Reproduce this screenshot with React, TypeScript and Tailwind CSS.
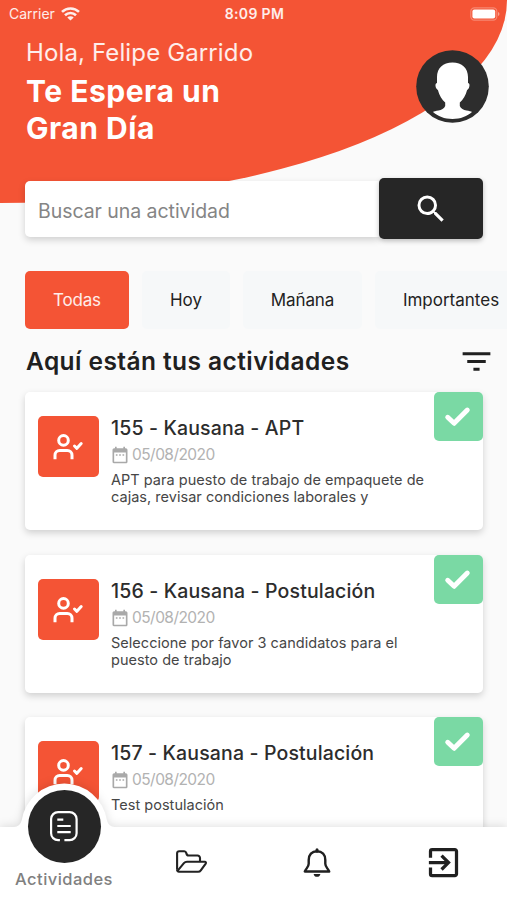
import { MdDateRange, MdExitToApp, MdFilterList, MdSearch } from "react-icons/md";

type Activity = { title: string; date: string; description: string[] };

const activities: Activity[] = [
  {
    title: "155 - Kausana - APT",
    date: "05/08/2020",
    description: ["APT para puesto de trabajo de empaquete de", "cajas, revisar condiciones laborales y"],
  },
  {
    title: "156 - Kausana - Postulación",
    date: "05/08/2020",
    description: ["Seleccione por favor 3 candidatos para el", "puesto de trabajo"],
  },
  {
    title: "157 - Kausana - Postulación",
    date: "05/08/2020",
    description: ["Test postulación"],
  },
];

function StatusBar() {
  return (
    <div className="flex h-[27px] items-center justify-between pr-[7px] pl-[9px] text-[14px] text-white/90">
      <div className="flex w-[200px] items-center gap-[6px]">
        <span>Carrier</span>
        <svg width="19" height="14" viewBox="0 0 19 14" fill="none" stroke="currentColor" strokeWidth="2.6">
          <path d="M1 4.900a12.200 12.200 0 0 1 17 0" />
          <path d="M4 8.300a7.900 7.900 0 0 1 11 0" />
          <path d="M9.500 13.500 6.300 10.500a4.600 4.600 0 0 1 6.400 0Z" fill="currentColor" stroke="none" />
        </svg>
      </div>
      <span className="text-[14px] font-semibold tracking-[0.350px] whitespace-nowrap">8:09 PM</span>
      <div className="flex w-[200px] justify-end">
        <svg width="30" height="14" viewBox="0 0 30 14">
          <rect x="0.8" y="0.8" width="26" height="12.4" rx="3.6" fill="none" stroke="#fff" strokeOpacity="0.3" strokeWidth="1.2" />
          <rect x="2.400" y="2.400" width="22.800" height="9.200" rx="2" fill="#fff" />
          <path d="M28 5v4q1.500-.6 1.500-2T28 5Z" fill="#fff" fillOpacity="0.45" />
        </svg>
      </div>
    </div>
  );
}

function Avatar() {
  return (
    <svg className="mt-[9px] shrink-0" width="73" height="73" viewBox="0 0 73 73">
      <circle cx="36.500" cy="36.500" r="36.300" fill="#2d2d2d" />
      <path
        d="M36.500 12.500c-9.500 0-15.500 5.800-15.500 14.500v6c-2 .3-1.800 3.500-.6 5.500.5.900 1.200 1.100 1.500 1.500 1.200 5.200 4.200 9.700 7.300 12.600v3.400c-1 2.800-3.800 3.900-6.700 4.600-2.500.5-4.800.8-5.500 1.300 4.700 4.200 11.500 7 19.500 7s14.900-2.800 19.500-7c-.8-.5-3-.8-5.500-1.300-2.900-.7-5.700-1.800-6.700-4.600v-3.400c3.100-2.900 6.100-7.400 7.300-12.600.4-.4 1-.6 1.500-1.500 1.200-2 1.400-5.200-.6-5.500v-6c0-8.700-6-14.500-15.500-14.500Z"
        fill="#fff"
      />
    </svg>
  );
}

function UserCheckIcon() {
  return (
    <svg width="61" height="61" viewBox="0 0 61 61" fill="none" stroke="#fff" strokeWidth="3" strokeLinejoin="round">
      <circle cx="25.500" cy="24.400" r="4.800" />
      <path d="M17 43.200v-4a4.700 4.700 0 0 1 4.700-4.700h7.600a4.700 4.700 0 0 1 4.700 4.700v4" />
      <path d="m36.500 30 2.400 2.300 4.300-4.700" strokeLinecap="round" />
    </svg>
  );
}

function ActivityCard({ title, date, description }: Activity) {
  return (
    <article className="flex h-[138px] rounded-[5px] bg-white pl-[13px] shadow-[0_3px_7px_rgba(0,0,0,0.17)]">
      <div className="mt-[24px] h-[61px] w-[61px] shrink-0 rounded-[5px] bg-[#f45435]">
        <UserCheckIcon />
      </div>
      <div className="ml-[12px] min-w-0 flex-1 pt-[24px] whitespace-nowrap">
        <h3 className="text-[19.500px] leading-[24px] font-medium tracking-[0.140px] text-[#2c2c2c]">{title}</h3>
        <div className="mt-[5px] -ml-px flex h-[20px] items-center gap-[2px] text-[#a9a9a9]">
          <MdDateRange size={20} />
          <span className="text-[15.500px] leading-[20px] tracking-[-0.550px] text-[#b2b2b2]">{date}</span>
        </div>
        <p className="mt-[6px] text-[14.500px] leading-[17.300px] tracking-[0.030px] text-[#464646]">
          {description.map((line) => (
            <span key={line} className="block">{line}</span>
          ))}
        </p>
      </div>
      <div className="h-[49px] w-[49px] shrink-0 rounded-[5px] bg-[#7ad9a4]">
        <svg width="49" height="49" viewBox="0 0 49 49" fill="none" stroke="#fff" strokeWidth="4.900" strokeLinecap="round" strokeLinejoin="round">
          <path d="m13.700 25.300 6.400 6L33.300 18" />
        </svg>
      </div>
    </article>
  );
}

function BottomNav() {
  return (
    <nav className="absolute inset-x-0 bottom-0 h-[117px]">
      <svg className="absolute inset-0 drop-shadow-[0_-1px_5px_rgba(0,0,0,0.12)]" width="507" height="117" viewBox="0 0 507 117">
        <path d="M-10 44H14Q20 44 21.800 37A43 43 0 0 1 106.800 37Q108.600 44 114.600 44H517V130H-10Z" fill="#fff" />
      </svg>
      <div className="relative flex h-full">
        <div className="flex w-[128px] flex-col items-center pt-[7px]">
          <div className="h-[73px] w-[73px] rounded-full bg-[#262626]">
            <svg width="73" height="73" viewBox="0 0 73 73" fill="none" stroke="#fff" strokeWidth="2.200">
              <path d="M31.900 50.200h-1.800a7 7 0 0 1-7-7V29.100a7 7 0 0 1 7-7h11.500a7 7 0 0 1 7 7v14.100a7 7 0 0 1-7 7h-5.200" />
              <path d="M29.300 29.700h6M29.300 36h13.400M29.300 42.200h13.400" />
            </svg>
          </div>
          <span className="mt-[6px] text-[16.500px] leading-[20px] font-medium tracking-[0.450px] text-[#808080]">Actividades</span>
        </div>
        <div className="flex w-[126px] justify-center pt-[66px]">
          <svg width="34" height="26" viewBox="0 0 34 26" fill="none" stroke="#222" strokeWidth="2.100" strokeLinejoin="round">
            <path d="M3.100 20.500V4.200a2 2 0 0 1 2-2h5.200c1.300 0 1.700.8 2 1.900.4 1.500.9 2.400 2.300 2.400h8.900a2.500 2.500 0 0 1 2.500 2.500v3.700" />
            <path d="M3.100 20.500a1.900 1.900 0 0 0 2 2.300h19c1.300 0 2-.4 2.700-1.400l4.900-6.800c.6-.9.2-1.800-.9-1.800H13c-1.400 0-2.200.3-3.100 1.300L3.900 21.300" />
          </svg>
        </div>
        <div className="flex w-[126px] justify-center pt-[65px]">
          <svg width="28" height="30" viewBox="0 0 28 30" fill="none" stroke="#202020" strokeWidth="2.400" strokeLinejoin="round">
            <path d="M14 3.200c-5.200 0-8.300 3.700-8.300 8.700v3.900c0 3-2.400 4.500-3.900 7.700h24.400c-1.500-3.200-3.900-4.700-3.900-7.700v-3.900c0-5-3.100-8.700-8.300-8.700Z" />
            <path d="M14 1.800v1.500" strokeWidth="3" strokeLinecap="round" />
            <path d="M10.600 25.900h6.800q-.7 2.900-3.400 2.900t-3.400-2.900Z" fill="#202020" stroke="none" />
          </svg>
        </div>
        <div className="flex w-[127px] justify-center pt-[60px] text-[#202020]">
          <MdExitToApp size={39} />
        </div>
      </div>
    </nav>
  );
}

export default function App() {
  return (
    <div className="relative h-[900px] w-[507px] overflow-hidden bg-[#fafafa] font-['Inter',sans-serif]">
      <div className="absolute inset-x-0 top-0 h-[202.500px] rounded-br-[100%] bg-[#f45435]" />
      <div className="relative flex h-full flex-col">
        <StatusBar />
        <header className="flex h-[151px] justify-between pt-[14px] pr-[18px] pl-[26px] whitespace-nowrap text-white">
          <div>
            <p className="text-[24px] leading-[24px] tracking-[0.130px] text-white/90">Hola, Felipe Garrido</p>
            <h1 className="mt-[8px] text-[30px] leading-[36.500px] font-bold tracking-[0.520px]">
              Te Espera un
              <br />
              Gran Día
            </h1>
          </div>
          <Avatar />
        </header>
        <div className="flex h-[61px] items-center pr-[24px] pl-[25px]">
          <div className="flex h-[56px] grow items-center rounded-l-[5px] bg-white pt-[5px] pl-[13px] text-[19.500px] leading-[24px] tracking-[-0.050px] text-[#858585] shadow-[0_3px_7px_rgba(0,0,0,0.17)]">
            <span>Buscar una actividad</span>
          </div>
          <button className="relative flex h-[61px] w-[104px] items-center justify-center rounded-[5px] bg-[#262626] text-white shadow-[0_2px_5px_rgba(0,0,0,0.25)]">
            <MdSearch size={36} />
          </button>
        </div>
        <div className="mt-[32px] flex h-[58px] shrink-0 gap-[13px] pl-[25px] text-[17px] whitespace-nowrap text-[#222]">
          <button className="w-[104px] shrink-0 rounded-[5px] bg-[#f45435] pt-[2px] tracking-[-0.200px] text-white/90">Todas</button>
          <button className="w-[88px] shrink-0 rounded-[5px] bg-[#f6f8f9] pt-[2px]">Hoy</button>
          <button className="w-[119px] shrink-0 rounded-[5px] bg-[#f6f8f9] pt-[2px] tracking-[-0.100px]">Mañana</button>
          <button className="w-[152px] shrink-0 rounded-[5px] bg-[#f6f8f9] pt-[2px]">Importantes</button>
        </div>
        <div className="flex h-[63px] items-center justify-between pt-[2px] pr-[12px] pl-[26px] text-[#202020]">
          <h2 className="text-[24.500px] font-semibold tracking-[0.430px] whitespace-nowrap">Aquí están tus actividades</h2>
          <MdFilterList size={37} />
        </div>
        <main className="flex flex-col gap-[24.500px] pr-[24px] pl-[25px]">
          {activities.map((activity) => (
            <ActivityCard key={activity.title} {...activity} />
          ))}
        </main>
      </div>
      <BottomNav />
    </div>
  );
}
